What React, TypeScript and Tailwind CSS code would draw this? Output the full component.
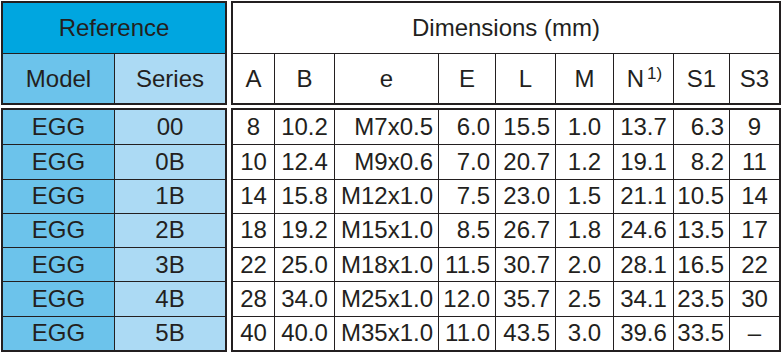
import React from "react";

const rows = [
  ["EGG", "00", "8", "10.2", "M7x0.5", "6.0", "15.5", "1.0", "13.7", "6.3", "9"],
  ["EGG", "0B", "10", "12.4", "M9x0.6", "7.0", "20.7", "1.2", "19.1", "8.2", "11"],
  ["EGG", "1B", "14", "15.8", "M12x1.0", "7.5", "23.0", "1.5", "21.1", "10.5", "14"],
  ["EGG", "2B", "18", "19.2", "M15x1.0", "8.5", "26.7", "1.8", "24.6", "13.5", "17"],
  ["EGG", "3B", "22", "25.0", "M18x1.0", "11.5", "30.7", "2.0", "28.1", "16.5", "22"],
  ["EGG", "4B", "28", "34.0", "M25x1.0", "12.0", "35.7", "2.5", "34.1", "23.5", "30"],
  ["EGG", "5B", "40", "40.0", "M35x1.0", "11.0", "43.5", "3.0", "39.6", "33.5", "–"],
];

// alignment for right-table data columns
const align = [
  "justify-center",
  "justify-center",
  "justify-end pr-[5px]",
  "justify-end pr-[5px]",
  "justify-end pr-[5px]",
  "justify-center",
  "justify-center",
  "justify-end pr-[5px]",
  "justify-center",
];

const rightCols = "grid grid-cols-[41px_60px_104px_57px_60px_58px_60px_56px_50px]";

export default function App() {
  return (
    <div
      className="w-[782px] h-[353px] bg-white text-[#231f20] pl-[1px] pt-[1px] flex flex-col gap-[3px]"
      style={{ fontFamily: '"Liberation Sans", Arial, sans-serif' }}
    >
      {/* Header */}
      <div className="flex gap-[4px] h-[104px]">
        <div className="w-[226px] h-full border-2 border-[#231f20] grid grid-rows-[50px_50px] text-[24px] leading-none">
          <div className="bg-[#00a6e0] flex items-center justify-center">Reference</div>
          <div className="grid grid-cols-[111px_111px] border-t border-[#231f20]">
            <div className="bg-[#6cc3eb] flex items-center justify-center">Model</div>
            <div className="bg-[#acdaf4] border-l border-[#231f20] flex items-center justify-center">Series</div>
          </div>
        </div>
        <div className="w-[550px] h-full border-2 border-[#231f20] grid grid-rows-[50px_50px] text-[24px] leading-none">
          <div className="flex items-center justify-center">Dimensions (mm)</div>
          <div className={`${rightCols} border-t border-[#231f20]`}>
            <div className="flex items-center justify-center">A</div>
            <div className="border-l border-[#231f20] flex items-center justify-center">B</div>
            <div className="border-l border-[#231f20] flex items-center justify-center">e</div>
            <div className="border-l border-[#231f20] flex items-center justify-center">E</div>
            <div className="border-l border-[#231f20] flex items-center justify-center">L</div>
            <div className="border-l border-[#231f20] flex items-center justify-center">M</div>
            <div className="border-l border-[#231f20] flex items-center justify-center pl-[2px]">
              <span>N</span>
              <span className="text-[17px] relative -top-[5px] ml-[3px]">1)</span>
            </div>
            <div className="border-l border-[#231f20] flex items-center justify-center">S1</div>
            <div className="border-l border-[#231f20] flex items-center justify-center">S3</div>
          </div>
        </div>
      </div>

      {/* Data */}
      <div className="flex gap-[4px] h-[244px]">
        <div className="w-[226px] h-full border-2 border-[#231f20] grid grid-rows-7 text-[24px] leading-none">
          {rows.map((r, i) => (
            <div key={i} className={`grid grid-cols-[111px_111px] ${i > 0 ? "border-t border-[#231f20]" : ""}`}>
              <div className="bg-[#6cc3eb] flex items-center justify-center">{r[0]}</div>
              <div className="bg-[#acdaf4] border-l border-[#231f20] flex items-center justify-center">{r[1]}</div>
            </div>
          ))}
        </div>
        <div className="w-[550px] h-full border-2 border-[#231f20] grid grid-rows-7 text-[24px] leading-none">
          {rows.map((r, i) => (
            <div key={i} className={`${rightCols} ${i > 0 ? "border-t border-[#231f20]" : ""}`}>
              {r.slice(2).map((v, j) => (
                <div
                  key={j}
                  className={`flex items-center ${align[j]} ${j > 0 ? "border-l border-[#231f20]" : ""}`}
                >
                  {v}
                </div>
              ))}
            </div>
          ))}
        </div>
      </div>
    </div>
  );
}
